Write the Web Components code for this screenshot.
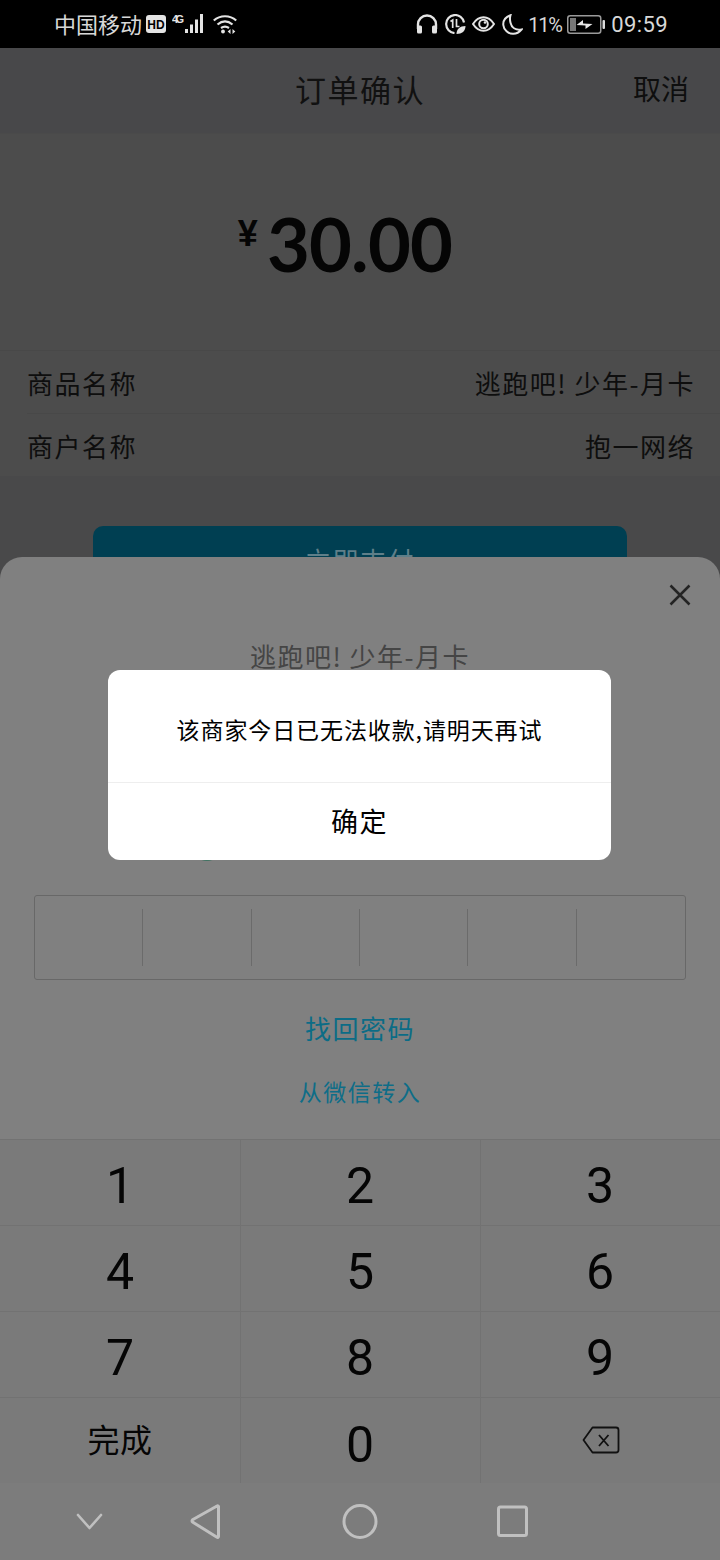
<!DOCTYPE html>
<html lang="zh">
<head>
<meta charset="utf-8">
<style>
html,body{margin:0;padding:0;background:#49494a}
body{width:720px;height:1560px;overflow:hidden;position:relative;font-family:"Noto Sans CJK SC","Liberation Sans",sans-serif}
</style>
</head>
<body>
<status-bar></status-bar>
<order-page></order-page>
<pay-sheet></pay-sheet>
<alert-dialog message="该商家今日已无法收款,请明天再试" action="确定"></alert-dialog>
<script>
class StatusBar extends HTMLElement {
    constructor() {
        super()
        this.attachShadow({ mode: 'open' }).innerHTML = `<style>
:host{display:flex;height:48px;background:#000;color:#d8d8d8;align-items:center;justify-content:space-between;padding:0 52px 0 54px;box-sizing:border-box;font-family:"Noto Sans CJK SC",sans-serif}
.side{display:flex;align-items:center}
.carrier{font-size:22px;line-height:30px;margin-top:-3px}
.num{font-family:Roboto,sans-serif;font-size:22px;line-height:30px;margin-top:1px}
svg{display:block;flex:none}
</style>
<div class="side">
  <span class="carrier">中国移动</span>
  <svg width="20" height="18" viewBox="0 0 20 18" style="margin-left:4px"><rect width="20" height="18" rx="3" fill="#e4e4e4"/><text x="10" y="13.500" font-family="Liberation Sans" font-size="12" font-weight="700" text-anchor="middle" fill="#000">HD</text></svg>
  <svg width="34" height="20" viewBox="0 0 34 20" style="margin-left:6px"><text x="0" y="9" font-family="Liberation Sans" font-size="11" font-weight="700" fill="#e4e4e4" textLength="12">4G</text><g fill="#e4e4e4"><rect x="13" y="15" width="3" height="4"/><rect x="18" y="10.500" width="3" height="8.500"/><rect x="23" y="5.500" width="3" height="13.500"/><rect x="28" y="0" width="3" height="19"/></g></svg>
  <svg width="24" height="20" viewBox="0 0 24 20" style="margin-left:7px" fill="none" stroke="#e4e4e4" stroke-width="2.200"><path d="M.8 6.500C7 .8 17 .8 23.200 6.500"/><path d="M4.500 10.500c4.700-4 10.300-4 15 0"/><path d="M8 14c2.600-1.700 5.400-1.700 8 0"/><circle cx="10" cy="17.500" r="1.900" fill="#e4e4e4" stroke="none"/><path d="M17.500 15l-2.800 2.500 2.800 2.500zM19.500 15l2.800 2.500-2.800 2.500z" fill="#e4e4e4" stroke="none"/></svg>
</div>
<div class="side">
  <svg width="22" height="20" viewBox="0 0 22 20" fill="none" stroke="#e4e4e4" stroke-width="2.400"><path d="M2 15V10.500a9 9 0 0 1 18 0V15"/><rect x="1" y="11.500" width="5" height="8" rx="1.500" fill="#e4e4e4" stroke="none"/><rect x="16" y="11.500" width="5" height="8" rx="1.500" fill="#e4e4e4" stroke="none"/></svg>
  <svg width="22" height="20" viewBox="0 0 22 20" style="margin-left:6px" fill="none" stroke="#e4e4e4" stroke-width="2.200"><path d="M20 8.500A9 9 0 1 0 10.500 19"/><path d="M6.500 7.500l2.200-1.500V14M12.500 5v7.500h3" stroke-width="1.700"/><path d="M12.500 20c0-5 3.500-8 9-8 0 5-3.500 8-9 8z" fill="#e4e4e4" stroke="none"/></svg>
  <svg width="23" height="16" viewBox="0 0 23 16" style="margin-left:6px" fill="none" stroke="#e4e4e4" stroke-width="2"><path d="M1 8c5.800-9 15.200-9 21 0-5.800 9-15.200 9-21 0z"/><circle cx="11.500" cy="8" r="4.300"/><circle cx="13" cy="6.500" r="1.300" fill="#e4e4e4" stroke="none"/></svg>
  <svg width="21" height="21" viewBox="0 0 21 21" style="margin-left:7px" fill="none" stroke="#e4e4e4" stroke-width="2"><path d="M8.500 1.200C3.500 3 1 7 1.300 11c.4 5 5 9 10 8.800 3.300-.1 6-1.700 8.200-4.300-6 1-10-2.200-11-6.800C7.800 6 7.800 3.500 8.500 1.200z"/></svg>
  <span class="num" style="margin-left:5px;width:33px;letter-spacing:-1.200px;font-size:20px">11%</span>
  <svg width="38" height="19" viewBox="0 0 38 19" style="margin-left:6px"><rect x=".750" y=".750" width="33" height="17.500" rx="2.500" fill="none" stroke="#9a9a9a" stroke-width="1.500"/><rect x="3" y="3" width="6" height="13" fill="#777"/><path d="M9.500 10L16 5v3.500L25.500 9 18.500 14v-3.500z" fill="#e8e8e8"/><rect x="35.500" y="5" width="2.500" height="9" rx="1" fill="#dcdcdc"/></svg>
  <span class="num" style="margin-left:6px;letter-spacing:.4px">09:59</span>
</div>`
    }
}
customElements.define('status-bar', StatusBar)

class InfoRow extends HTMLElement {
    constructor() {
        super()
        this.attachShadow({ mode: 'open' }).innerHTML = `<style>
:host{display:flex;justify-content:space-between;align-items:center;height:62px;margin-left:27px;padding-right:25px;font-size:26px;letter-spacing:1.500px;color:#0e0e0e;font-family:"Noto Sans CJK SC",sans-serif}
</style><span><slot name="k"></slot></span><span><slot name="v"></slot></span>`
    }
}
customElements.define('info-row', InfoRow)

class OrderPage extends HTMLElement {
    constructor() {
        super()
        this.attachShadow({ mode: 'open' }).innerHTML = `<style>
:host{display:block;font-family:"Noto Sans CJK SC",sans-serif;color:#0e0e0e}
.nav{height:86px;background:#48484a;display:grid;grid-template-columns:1fr auto 1fr;align-items:center;font-size:31px;box-sizing:border-box;border-bottom:1px solid #4a4a4a;padding-bottom:4px}
.title{letter-spacing:1.500px;grid-column:2;color:#111}
.cancel{grid-column:3;justify-self:end;padding-right:31px;font-size:28px;position:relative;top:-1px}
.amount{height:216px;background:#4c4c4c;display:flex;justify-content:center;align-items:flex-start;color:#050505;box-sizing:border-box;padding:64px 30px 0 0}
.yen{font-size:36px;line-height:40px;font-family:"Liberation Sans",sans-serif;font-weight:700;margin:16px 9px 0 0}
.val{font-family:Lato,"Liberation Sans",sans-serif;font-weight:700;font-size:74px;line-height:92px;letter-spacing:-.8px}
.rows{background:#4c4c4c;border-top:1px solid #484848}
.rows info-row+info-row{border-top:1px solid #484848}
.pay{margin:50px 93px 0;height:120px;background:#003f52;border-radius:10px;text-align:center;color:#5f7f89;font-size:26px;padding-top:15px;box-sizing:border-box;letter-spacing:1.500px}
</style>
<div class="nav"><span class="title">订单确认</span><span class="cancel">取消</span></div>
<div class="amount"><span class="yen">¥</span><span class="val">30.00</span></div>
<div class="rows">
  <info-row><span slot="k">商品名称</span><span slot="v">逃跑吧! 少年-月卡</span></info-row>
  <info-row><span slot="k">商户名称</span><span slot="v">抱一网络</span></info-row>
</div>
<div class="pay">立即支付</div>`
    }
}
customElements.define('order-page', OrderPage)

class NumKey extends HTMLElement {
    constructor() {
        super()
        this.attachShadow({ mode: 'open' }).innerHTML = `<style>
:host{display:flex;align-items:center;justify-content:center;color:#050505;font-family:Roboto,"Noto Sans",sans-serif;font-size:50px;border-left:1px solid #727272;border-bottom:1px solid #727272;box-sizing:border-box;padding:6px 1px 0 0}
:host(:nth-child(3n+1)){border-left:0;padding-right:0}
</style><slot></slot>`
    }
}
customElements.define('num-key', NumKey)

class PaySheet extends HTMLElement {
    constructor() {
        super()
        const keys = ['1','2','3','4','5','6','7','8','9'].map(k => `<num-key>${k}</num-key>`).join('')
        this.attachShadow({ mode: 'open' }).innerHTML = `<style>
:host{display:flex;flex-direction:column;position:absolute;left:0;right:0;top:557px;bottom:0;background:#808080;border-radius:22px 22px 0 0;font-family:"Noto Sans CJK SC",sans-serif;overflow:hidden}
.close{position:absolute;right:29px;top:27px}
.mark{position:absolute;left:193px;top:276px;width:28px;height:28px;border-radius:50%;background:#3f7362}
.name{margin-top:81px;text-align:center;font-size:26px;line-height:36px;letter-spacing:1.500px;color:#454545}
.box{margin:221px 34px 0;height:85px;box-sizing:border-box;border:1px solid #686868;border-radius:3px;display:grid;grid-template-columns:repeat(6,1fr);align-items:center}
.box i{display:block;height:57px;margin-left:-1px;border-left:1px solid #6b6b6b}
.box i:first-child{border-left:0}
.find{margin-top:30px;text-align:center;font-size:26px;line-height:36px;letter-spacing:1.500px;color:#0b6c86}
.wx{margin-top:27px;text-align:center;font-size:23px;line-height:36px;letter-spacing:1.500px;color:#0e6d88}
.pad{margin-top:30px;display:grid;grid-template-columns:repeat(3,1fr);grid-auto-rows:86px;background:#7a7a7a;border-top:1px solid #727272;height:343px;box-sizing:content-box}
.bar{flex:1;background:#7c7c7c}
</style>
<svg class="close" width="22" height="22" viewBox="0 0 22 22" stroke="#242424" stroke-width="2.500" fill="none"><path d="M1.500 1.500l19 19M20.500 1.500l-19 19"/></svg>
<div class="mark"></div>
<div class="name">逃跑吧! 少年-月卡</div>
<div class="box"><i></i><i></i><i></i><i></i><i></i><i></i></div>
<div class="find">找回密码</div>
<div class="wx">从微信转入</div>
<div class="pad">${keys}
  <num-key style="border-bottom:0;font-family:'Noto Sans CJK SC',sans-serif;font-size:32px;letter-spacing:.5px;padding:0 0 6px">完成</num-key>
  <num-key style="border-bottom:0;padding-top:7px">0</num-key>
  <num-key style="border-bottom:0;padding:0 0 2px"><svg width="38" height="28" viewBox="0 0 38 28" fill="none" stroke="#111" stroke-width="1.800" stroke-linejoin="round"><path d="M10.500 1.500H34a2.500 2.500 0 0 1 2.500 2.500v20a2.500 2.500 0 0 1-2.500 2.500H10.500L1.500 14z"/><path d="M17 9l9.500 11M26.500 9L17 20"/></svg></num-key>
</div>
<sys-nav class="bar"></sys-nav>`
    }
}
customElements.define('pay-sheet', PaySheet)

class SysNav extends HTMLElement {
    constructor() {
        super()
        this.attachShadow({ mode: 'open' }).innerHTML = `<style>
:host{display:block}
svg{display:block}
</style>
<svg width="720" height="77" viewBox="0 0 720 77" fill="none" stroke="#c0c0c0" stroke-width="3" stroke-linejoin="round" stroke-linecap="round">
<path d="M78 32l11.500 13L101 32" stroke-width="2.600"/>
<path d="M218.500 23.500v30a1 1 0 0 1-1.500 .8L192.500 39a1.500 1.500 0 0 1 0-2.200L217 23a1 1 0 0 1 1.500 .5z"/>
<circle cx="360" cy="38.500" r="16"/>
<rect x="498.500" y="24" width="28" height="28.500" rx="2"/>
</svg>`
    }
}
customElements.define('sys-nav', SysNav)

class AlertDialog extends HTMLElement {
    constructor() {
        super()
        this.attachShadow({ mode: 'open' }).innerHTML = `<style>
:host{display:block;position:absolute;left:108px;top:670px;width:503px;height:190px;background:#fff;border-radius:12px;font-family:"Noto Sans CJK SC",sans-serif;color:#000;overflow:hidden}
.msg{height:113px;box-sizing:border-box;padding-top:6px;display:flex;align-items:center;justify-content:center;font-size:23px;letter-spacing:.9px;border-bottom:1px solid #eee}
.btn{height:77px;box-sizing:border-box;padding-bottom:3px;display:flex;align-items:center;justify-content:center;font-size:27px;letter-spacing:1.500px}
</style><div class="msg"></div><div class="btn"></div>`
    }
    connectedCallback() {
        this.shadowRoot.querySelector('.msg').textContent = this.getAttribute('message')
        this.shadowRoot.querySelector('.btn').textContent = this.getAttribute('action')
    }
}
customElements.define('alert-dialog', AlertDialog)
</script>
</body>
</html>
